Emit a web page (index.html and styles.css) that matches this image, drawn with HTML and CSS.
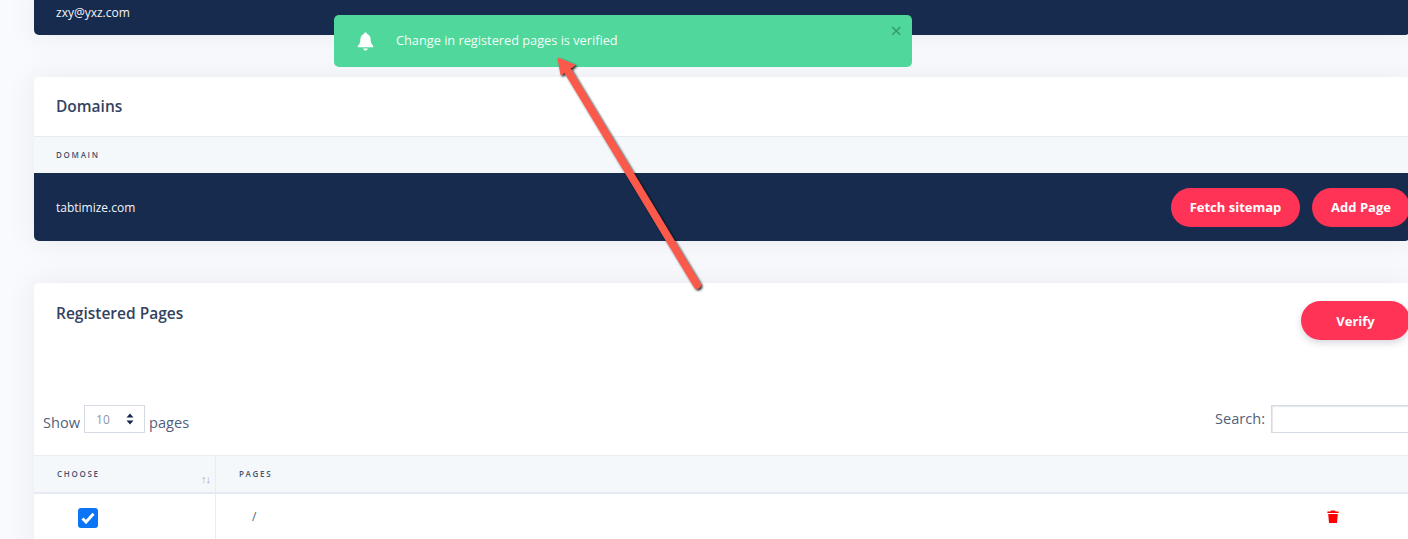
FILE: index.html
```html
<!DOCTYPE html>
<html lang="en">
<head>
  <meta charset="UTF-8" />
  <title>Registered Pages</title>
  <link rel="stylesheet" href="styles.css">
</head>
<body>

  <div class="page">
    <div class="card account">zxy@yxz.com</div>

    <div class="card">
      <h3 class="card-title domains-title">Domains</h3>
      <div class="thead domain-head">Domain</div>
      <div class="domain-row">
        <span>tabtimize.com</span>
        <div class="actions">
          <button class="btn btn-fetch">Fetch sitemap</button>
          <button class="btn btn-add">Add Page</button>
        </div>
      </div>
    </div>

    <div class="card pages-card">
      <div class="pages-top">
        <h3 class="card-title">Registered Pages</h3>
        <button class="btn btn-verify">Verify</button>
      </div>

      <div class="filters">
        <div class="show">
          <span class="show-label">Show</span>
          <span class="select">10
            <svg width="8" height="12" viewBox="0 0 8 12"><path d="M4 0.5 7.5 4.5H0.5ZM4 11.5 0.5 7.5H7.5Z" fill="#16294d"/></svg>
          </span>
          <span class="show-label">pages</span>
        </div>
        <div class="search"><span class="search-label">Search:</span> <span class="search-box"></span></div>
      </div>

      <div class="table-head">
        <div class="col-choose">Choose <span class="sort">↑↓</span></div>
        <div class="col-pages">Pages</div>
      </div>
      <div class="table-row">
        <div class="col-choose">
          <span class="checkbox">
            <svg width="14" height="12" viewBox="0 0 14 12"><path d="M1.5 6.5 5 10 12.5 1.8" fill="none" stroke="#fff" stroke-width="3"/></svg>
          </span>
        </div>
        <div class="col-pages">/</div>
        <svg class="trash" width="12" height="13" viewBox="0 0 12 13"><path d="M4 0.5H8L8.6 1.5H11.6V3H0.4V1.5H3.4ZM1.2 4H10.8L10 13H2Z" fill="#f00"/></svg>
      </div>
    </div>
  </div>

  <div class="alert">
    <svg class="bell" width="17" height="19" viewBox="0 0 17 19"><path d="M8.5 0.5C9.4 0.5 10 1.1 10 1.9 12.5 2.5 13.6 4.6 13.6 7.2 13.6 10.8 14.6 12.2 16.2 13.8V15.2H0.8V13.8C2.4 12.2 3.4 10.8 3.4 7.2 3.4 4.6 4.5 2.5 7 1.9 7 1.1 7.6 0.5 8.5 0.5ZM6.3 16.4H10.7C10.6 17.7 9.7 18.5 8.5 18.5S6.4 17.7 6.3 16.4Z" fill="#fff"/></svg>
    <span class="alert-text">Change in registered pages is verified</span>
    <span class="close">×</span>
  </div>

  <svg class="arrow" width="180" height="250" viewBox="0 0 180 250">
    <defs>
      <filter id="arrowShadow" x="-20%" y="-20%" width="140%" height="140%">
        <feDropShadow dx="1.5" dy="1.5" stdDeviation="1.2" flood-color="#000" flood-opacity="0.9"/>
      </filter>
    </defs>
    <g filter="url(#arrowShadow)">
      <path d="M157 235 26 18" fill="none" stroke="#fb5a4c" stroke-width="7.5" stroke-linecap="round"/>
      <path d="M18 8 35 15 21 25Z" fill="#fb5a4c" stroke="#fb5a4c" stroke-width="1"/>
    </g>
  </svg>

</body>
</html>
```

FILE: styles.css
```css
html, body {
  height: 539px;
  overflow: hidden;
}
body {
  margin: 0;
  font-family: 'Open Sans', sans-serif;
  background: #f9fafd;
  color: #3c4a66;
}
.page {
  width: 1376px;
  padding-left: 34px;
}
.card {
  background: white;
  border-radius: 5px;
  margin-bottom: 42px;
  overflow: hidden;
  box-shadow: 0 0 30px rgba(50,50,93,0.08);
}
.account {
  background: #162b4d;
  color: #f2f4f8;
  height: 35px;
  padding: 4px 22px 0;
  box-sizing: border-box;
  font-size: 12px;
  line-height: 17px;
  border-radius: 0 0 5px 5px;
}
.card-title {
  margin: 0;
  font-size: 15.5px;
  font-weight: 600;
  color: #34425f;
}
.domains-title {
  height: 59px;
  line-height: 59px;
  padding-left: 22px;
}
.thead {
  background: #f5f8fb;
  border-top: 1px solid #e6ebf1;
  font-size: 8px;
  font-weight: 600;
  letter-spacing: 1.7px;
  text-transform: uppercase;
  color: #46536e;
}
.domain-head {
  height: 36px;
  line-height: 36px;
  padding-left: 22px;
}
.domain-row {
  background: #162b4d;
  color: #f2f4f8;
  height: 68px;
  padding-left: 22px;
  display: flex;
  align-items: center;
  justify-content: space-between;
  font-size: 12px;
}
.actions {
  display: flex;
  gap: 12px;
}
.btn {
  height: 39px;
  border: none;
  border-radius: 20px;
  background: #ff3355;
  color: white;
  font-family: inherit;
  font-size: 13px;
  font-weight: 700;
  padding: 0;
}
.btn-fetch {
  width: 129px;
}
.btn-add {
  width: 98px;
}
.btn-verify {
  width: 109px;
  box-shadow: 0 3px 7px rgba(50,50,93,0.2);
}
.pages-card {
  margin-bottom: 0;
  border-radius: 5px 5px 0 0;
}
.pages-top {
  display: flex;
  justify-content: space-between;
  height: 122px;
  padding: 18px 0 0 22px;
  box-sizing: border-box;
}
.pages-top .card-title {
  line-height: 24px;
}
.filters {
  height: 28px;
  margin-bottom: 22px;
  padding-left: 9px;
  display: flex;
  justify-content: space-between;
  align-items: center;
  font-size: 14.6px;
  color: #525f7a;
}
.show {
  display: flex;
  align-items: center;
  gap: 4px;
}
.show-label {
  margin-top: 5px;
}
.select {
  width: 38px;
  height: 26px;
  border: 1px solid #d5dbe3;
  display: flex;
  align-items: center;
  justify-content: space-between;
  padding: 0 10px 0 11px;
  font-size: 12px;
  color: #8b96a8;
}
.search {
  display: flex;
  align-items: center;
  gap: 6px;
}
.search-label {
  margin-top: -3px;
}
.search-box {
  width: 137px;
  height: 26px;
  border: 1px solid #d5dbe3;
  box-shadow: inset 1px 1px 1px #e4e8ee;
}
.table-head {
  height: 36px;
  display: flex;
  background: #f5f8fb;
  border-top: 1px solid #e9edf2;
  border-bottom: 2px solid #e6ebf1;
  font-size: 8px;
  font-weight: 600;
  letter-spacing: 1.7px;
  text-transform: uppercase;
  color: #46536e;
  line-height: 35px;
}
.col-choose {
  width: 182px;
  flex-shrink: 0;
  box-sizing: border-box;
  padding-left: 23px;
  border-right: 1px solid #e9edf2;
  position: relative;
}
.col-pages {
  padding-left: 23px;
}
.sort {
  position: absolute;
  right: 5px;
  top: 5px;
  font-size: 11px;
  letter-spacing: -1px;
  color: #a0a9b8;
}
.table-row {
  height: 60px;
  display: flex;
  position: relative;
  font-size: 12px;
  color: #525f7a;
}
.table-row .col-choose {
  padding: 14px 0 0 44px;
}
.table-row .col-pages {
  padding: 13px 0 0 36px;
  line-height: 20px;
}
.checkbox {
  width: 20px;
  height: 20px;
  border-radius: 3px;
  background: #0b75f5;
  display: flex;
  align-items: center;
  justify-content: center;
}
.trash {
  position: absolute;
  left: 1293px;
  top: 16px;
}
.alert {
  position: absolute;
  left: 334px;
  top: 15px;
  width: 578px;
  height: 52px;
  box-sizing: border-box;
  padding-left: 23px;
  display: flex;
  align-items: center;
  background: #50d79b;
  border-radius: 5px;
  color: #f4fdf8;
  font-size: 12.75px;
}
.bell {
  margin-right: 22px;
}
.alert-text {
  margin-bottom: 2px;
}
.close {
  position: absolute;
  right: 10px;
  top: 6px;
  font-size: 20px;
  line-height: 20px;
  color: #2f9a70;
}
.arrow {
  position: absolute;
  left: 540px;
  top: 50px;
}
```
